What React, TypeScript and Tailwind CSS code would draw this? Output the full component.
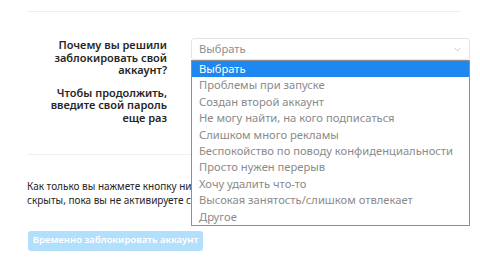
import { ChevronDown } from "lucide-react";

const OPTIONS = [
  "Выбрать",
  "Проблемы при запуске",
  "Создан второй аккаунт",
  "Не могу найти, на кого подписаться",
  "Слишком много рекламы",
  "Беспокойство по поводу конфиденциальности",
  "Просто нужен перерыв",
  "Хочу удалить что-то",
  "Высокая занятость/слишком отвлекает",
  "Другое",
];

export default function App() {
  return (
    <div className="w-[480px] h-[269px] overflow-hidden bg-white font-['Noto_Sans',sans-serif] text-[#262626]">
      <div className="pl-[27px] pr-[10px] pt-[11px]">
        <div className="h-px bg-[#efefef] mr-[9px]" />

        {/* Form rows */}
        <div className="pt-[26px]">
          <div className="flex items-start">
            <label className="w-[140px] shrink-0 text-right text-[11px] font-semibold leading-[12.6px] pt-[1px]">
              Почему вы решили заблокировать свой аккаунт?
            </label>
            <div className="relative ml-[24px] w-[279px] shrink-0">
              <div className="h-[22px] border border-[#e3e3e3] rounded-[3px] flex items-center justify-between pl-[7px] pr-[6px] text-[11.2px] text-[#8e8e8e]">
                <span>Выбрать</span>
                <ChevronDown className="w-[11px] h-[11px] text-[#b0b0b0]" strokeWidth={1.5} />
              </div>
              {/* open dropdown list */}
              <ul className="absolute left-0 top-[22px] z-10 w-[279px] h-[166px] bg-white border border-[#8f8f8f] text-[11.2px] text-[#8a8a8a]">
                {OPTIONS.map((o, i) => (
                  <li
                    key={o}
                    className={`h-[16.4px] leading-[16.4px] pl-[7px] whitespace-nowrap ${
                      i === 0 ? "bg-[#1e88f0] text-white" : ""
                    }`}
                  >
                    {o}
                  </li>
                ))}
              </ul>
            </div>
          </div>

          <div className="flex items-start mt-[10px]">
            <label className="w-[140px] shrink-0 text-right text-[11px] font-semibold leading-[12.6px]">
              Чтобы продолжить, введите свой пароль еще раз
            </label>
            <div className="ml-[24px] w-[279px] shrink-0 h-[22px] border border-[#e3e3e3] rounded-[3px]" />
          </div>
        </div>

        <div className="h-px bg-[#efefef] mt-[29px] mr-[9px]" />

        <p className="mt-[24px] text-[10px] leading-[14px] whitespace-nowrap">
          Как только вы нажмете кнопку ниже, фото, комментарии и отметки «Нравится» будут
          <br />
          скрыты, пока вы не активируете свой аккаунт, снова выполнив вход.
        </p>

        <button
          disabled
          className="mt-[24px] ml-px w-[175px] h-[20px] rounded-[3px] bg-[#b2dffc] text-white text-[9.6px] font-semibold whitespace-nowrap"
        >
          Временно заблокировать аккаунт
        </button>
      </div>
    </div>
  );
}
